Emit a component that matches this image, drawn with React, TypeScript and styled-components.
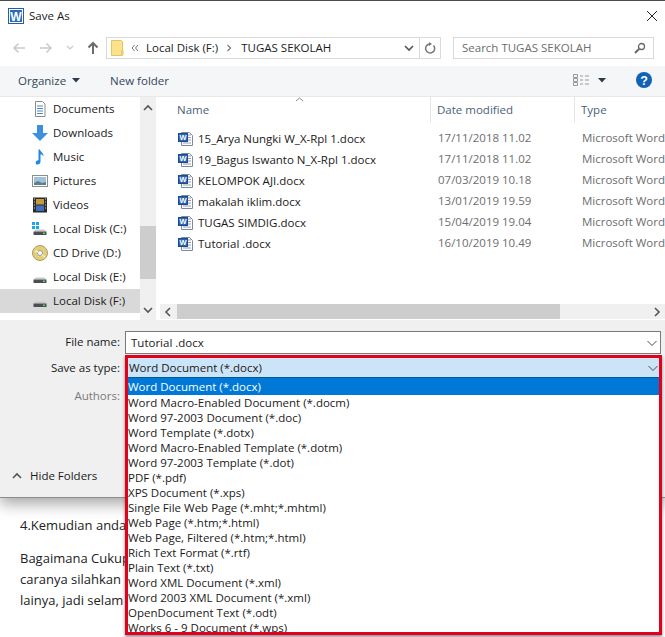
import styled, { createGlobalStyle } from "styled-components";
import { ReactNode } from "react";

const GlobalStyle = createGlobalStyle`
  html, body {
    margin: 0;
    padding: 0;
    width: 665px;
    height: 637px;
    overflow: hidden;
    background: #fff;
  }
  * { box-sizing: border-box; }
  body {
    font-family: "Open Sans", "Noto Sans", sans-serif;
    font-size: 11.5px;
    color: #1a1a1a;
  }
`;

const Page = styled.div`
  width: 665px;
  height: 637px;
  overflow: hidden;
  background: #fff;
`;

const Dialog = styled.div`
  position: relative;
  height: 498px;
  border-top: 1px solid #4a4a4a;
  border-bottom: 1px solid #8c8c8c;
  background: #fff;
  box-shadow: 0 6px 14px rgba(0, 0, 0, 0.35);
  display: flex;
  flex-direction: column;
`;

const TitleBar = styled.div`
  height: 29px;
  display: flex;
  align-items: center;
  padding: 0 7px 0 8px;
  gap: 5px;
  flex: none;
`;

const TitleText = styled.span`
  flex: 1;
`;

const AddressRow = styled.div`
  height: 36px;
  flex: none;
  display: flex;
  align-items: center;
  padding: 0 11px 0 12px;
`;

const NavButtons = styled.div`
  width: 94px;
  display: flex;
  align-items: center;
  gap: 13px;
`;

const AddressBox = styled.div`
  width: 335px;
  height: 22px;
  border: 1px solid #d9d9d9;
  display: flex;
  align-items: center;
  padding-left: 4px;
`;

const BarText = styled.span`
  margin-bottom: 2px;
`;

const Crumb = styled.span<{ $first?: boolean }>`
  margin: ${(p) => (p.$first ? "0 7px 0 7px" : "0 9px 0 8px")};
`;

const Spacer = styled.div`
  flex: 1;
`;

const RefreshCell = styled.div`
  width: 21px;
  height: 100%;
  border-left: 1px solid #d9d9d9;
  margin-left: 4px;
  display: flex;
  align-items: center;
  justify-content: center;
`;

const SearchBox = styled.div`
  width: 201px;
  height: 22px;
  margin-left: 12px;
  border: 1px solid #d9d9d9;
  display: flex;
  align-items: center;
  justify-content: space-between;
  padding: 0 7px 0 8px;
  color: #6d6d6d;
`;

const Toolbar = styled.div`
  height: 31px;
  flex: none;
  background: #f5f6f7;
  border-bottom: 1px solid #e8e8e8;
  display: flex;
  align-items: center;
  padding: 0 13px 2px 18px;
  color: #33475b;
`;

const ToolLabel = styled.span`
  margin-right: 6px;
`;

const NewFolder = styled.span`
  margin-left: 30px;
  flex: 1;
`;

const ViewGroup = styled.div`
  display: flex;
  align-items: center;
  gap: 8px;
  margin-right: 30px;
`;

const Main = styled.div`
  height: 223px;
  flex: none;
  display: flex;
`;

const NavPane = styled.div`
  width: 140px;
  height: 216px;
  flex: none;
`;

const NavRow = styled.div<{ $active?: boolean }>`
  height: 24px;
  display: flex;
  align-items: center;
  padding-left: 32px;
  gap: 5px;
  background: ${(p) => (p.$active ? "#d9d9d9" : "transparent")};
`;

const NavIcon = styled.span`
  width: 16px;
  height: 16px;
  flex: none;
  display: flex;
  align-items: center;
  justify-content: center;
`;

const VScroll = styled.div`
  width: 16px;
  height: 223px;
  flex: none;
  background: #f0f0f0;
  display: flex;
  flex-direction: column;
  align-items: center;
`;

const ScrollArrowBox = styled.div`
  height: 21px;
  width: 16px;
  flex: none;
  display: flex;
  align-items: center;
  justify-content: center;
`;

const VTrack = styled.div`
  flex: 1;
  width: 100%;
  padding-top: 108px;
  padding-bottom: 20px;
`;

const VThumb = styled.div`
  height: 100%;
  background: #cdcdcd;
`;

const ListPane = styled.div`
  flex: 1;
  margin-left: 4px;
  min-width: 0;
  display: flex;
  flex-direction: column;
  overflow: hidden;
  position: relative;
`;

const HeaderRow = styled.div`
  height: 26px;
  flex: none;
  display: grid;
  grid-template-columns: 271px 144px 1fr;
  color: #4c607a;
`;

const HeaderCell = styled.div<{ $first?: boolean }>`
  display: flex;
  align-items: center;
  padding-left: ${(p) => (p.$first ? "17px" : "6px")};
  padding-bottom: 2px;
  border-right: 1px solid #e5e5e5;
  &:last-child { border-right: none; }
`;

const SortCaret = styled.span`
  position: absolute;
  left: 135px;
  top: 0;
  line-height: 0;
`;

const FileList = styled.div`
  flex: 1;
  padding-top: 5px;
`;

const FileRow = styled.div`
  height: 21px;
  display: grid;
  grid-template-columns: 271px 144px 1fr;
  align-items: center;
`;

const FileName = styled.div`
  display: flex;
  align-items: center;
  gap: 4px;
  padding-left: 18px;
`;

const FileMeta = styled.div`
  padding-left: 7px;
  padding-bottom: 2px;
  color: #6d6d6d;
  white-space: nowrap;
`;

const HScroll = styled.div`
  height: 15px;
  margin-bottom: 1px;
  flex: none;
  background: #f0f0f0;
  display: flex;
  align-items: center;
`;

const HThumb = styled.div`
  width: 383px;
  height: 100%;
  margin-left: 1px;
  background: #cdcdcd;
`;

const Footer = styled.div`
  flex: 1;
  background: #f0f0f0;
  position: relative;
  padding-top: 11px;
`;

const FormRow = styled.div<{ $dim?: boolean }>`
  display: flex;
  align-items: center;
  height: 23px;
  margin-bottom: 3px;
  color: ${(p) => (p.$dim ? "#7a7a7a" : "#1a1a1a")};
`;

const FormLabel = styled.span`
  width: 120px;
  text-align: right;
  flex: none;
  margin-bottom: 2px;
`;

const NameInput = styled.div`
  width: 536px;
  height: 23px;
  margin-left: 5px;
  background: #fff;
  border: 1px solid #7a7a7a;
  display: flex;
  align-items: center;
  justify-content: space-between;
  padding: 0 2px 0 5px;
`;

const AuthorsRow = styled(FormRow)`
  margin-top: 5px;
`;

const HideFolders = styled.div`
  position: absolute;
  left: 11px;
  bottom: 14px;
  display: flex;
  align-items: center;
  gap: 7px;
`;

const TypeFrame = styled.div`
  position: absolute;
  left: 125px;
  top: 35px;
  width: 537px;
  height: 280px;
  border: 3px solid #e2001a;
  background: #fff;
  box-shadow: 0 2px 3px rgba(60, 60, 90, 0.6);
  overflow: hidden;
`;

const TypeCombo = styled.div`
  height: 20px;
  background: #cce4f7;
  border-bottom: 1px solid #005a9e;
  display: flex;
  align-items: center;
  justify-content: space-between;
  padding: 0 0 0 1px;
`;

const TypeItem = styled.div<{ $selected?: boolean }>`
  height: ${(p) => (p.$selected ? "17px" : "15px")};
  line-height: ${(p) => (p.$selected ? "17px" : "15px")};
  white-space: nowrap;
  background: ${(p) => (p.$selected ? "#0078d7" : "transparent")};
  color: ${(p) => (p.$selected ? "#fff" : "#1a1a1a")};
`;

const Article = styled.div`
  padding: 17px 0 0 20px;
  font-size: 13px;
  color: #222;
`;

const ArticleLine = styled.div<{ $gap?: number }>`
  height: 21px;
  line-height: 21px;
  white-space: nowrap;
  margin-bottom: ${(p) => p.$gap ?? 0}px;
`;

const Glyph = ({ w = 12, h = 12, children }: { w?: number; h?: number; children: ReactNode }) => (
  <svg width={w} height={h} viewBox={`0 0 ${w} ${h}`} fill="none" style={{ display: "block", flex: "none" }}>
    {children}
  </svg>
);

const Chevron = ({ dir = "down", color = "#555" }: { dir?: string; color?: string }) => {
  const paths: Record<string, string> = {
    down: "M2 4l4 4 4-4",
    up: "M2 8l4-4 4 4",
    left: "M8 2L4 6l4 4",
    right: "M4 2l4 4-4 4",
  };
  return (
    <Glyph>
      <path d={paths[dir]} stroke={color} strokeWidth="1.6" />
    </Glyph>
  );
};

const ThinChevron = () => (
  <Glyph>
    <path d="M1.5 4l4.5 4.5L10.5 4" stroke="#4d4d4d" strokeWidth="1" />
  </Glyph>
);

const Caret = () => (
  <Glyph w={8} h={5}>
    <path d="M0 0h8L4 4.5z" fill="#2b3b50" />
  </Glyph>
);

const WordLogo = () => (
  <svg width="16" height="16" viewBox="0 0 16 16" style={{ display: "block", flex: "none" }}>
    <rect x="0.5" y="0.5" width="15" height="15" fill="#fff" stroke="#2a5d9f" />
    <rect x="2" y="2" width="12" height="12" fill="#2b6cc0" />
    <text x="8" y="12.5" textAnchor="middle" fontSize="12" fontWeight="700" fontFamily="Liberation Sans" fill="#fff">W</text>
  </svg>
);

const DocIcon = () => (
  <svg width="16" height="16" viewBox="0 0 16 16" style={{ display: "block", flex: "none" }}>
    <path d="M3.5 1.5h8l3 3v10h-11z" fill="#fff" stroke="#7a8b9c" />
    <path d="M10 4h3M10 6.5h3M10 9h3M5 12h8" stroke="#8aa0b8" />
    <rect x="0.5" y="2.5" width="9" height="8" fill="#2a65b5" stroke="#1c4a8a" />
    <text x="5" y="9.3" textAnchor="middle" fontSize="7.5" fontWeight="700" fontFamily="Liberation Sans" fill="#fff">W</text>
  </svg>
);

const DriveShape = () => (
  <>
    <path d="M2 10.5l1.5-2h9l1.5 2z" fill="#c9c9c9" />
    <rect x="1.5" y="10.5" width="13" height="3.5" fill="#4a4f52" />
    <rect x="11" y="11.5" width="2" height="1.5" fill="#5fd35f" />
  </>
);

const navIcons: Record<string, ReactNode> = {
  documents: (
    <Glyph w={16} h={16}>
      <path d="M3.5 0.5h7l2.5 2.5v12.500h-9.500z" fill="#fff" stroke="#8a8a8a" />
      <path d="M5 5h6M5 7.500h6M5 10h6M5 12.500h6" stroke="#4d87c7" />
    </Glyph>
  ),
  downloads: (
    <Glyph w={16} h={16}>
      <path d="M5 0h6v8h5l-8 8-8-8h5z" fill="#3f8fe0" />
    </Glyph>
  ),
  music: (
    <Glyph w={16} h={16}>
      <path d="M6.500 0.500h1.500c0.500 3 4 3.500 3.500 7-0.800-1.500-2-2.200-3-2.300v7.300c0 1.800-1.500 3-3 3s-1.800-0.800-1.800-1.800c0-1.500 1.500-2.700 2.800-2.400z" fill="#1e88e5" />
    </Glyph>
  ),
  pictures: (
    <Glyph w={16} h={16}>
      <rect x="0.500" y="2.500" width="15" height="11" fill="#fff" stroke="#8d8d8d" />
      <rect x="2" y="4" width="12" height="8" fill="#9fc3dd" />
      <path d="M2 10l4-2 4 2 4-1v3H2z" fill="#5f7f8c" />
    </Glyph>
  ),
  videos: (
    <Glyph w={16} h={16}>
      <rect x="1" y="0.500" width="14" height="15" fill="#2a2a2a" />
      <rect x="4" y="2" width="8" height="5.500" fill="#c79a3a" />
      <rect x="4" y="8.500" width="8" height="5.500" fill="#3f6fc0" />
      <path d="M2 2h1M2 5h1M2 8h1M2 11h1M13 2h1M13 5h1M13 8h1M13 11h1" stroke="#ddd" />
    </Glyph>
  ),
  diskC: (
    <Glyph w={16} h={16}>
      <DriveShape />
      <path d="M0 1h3v3H0zM4 1h3v3H4zM0 5h3v3H0zM4 5h3v3H4z" fill="#1ea7e8" />
    </Glyph>
  ),
  cd: (
    <Glyph w={16} h={16}>
      <circle cx="8" cy="8" r="7.500" fill="#e3cf7a" stroke="#a99b62" />
      <circle cx="8" cy="8" r="2.500" fill="#fff" stroke="#999" />
      <path d="M3 6l3 1M10 10l3 2" stroke="#f7f2d0" strokeWidth="1.500" />
    </Glyph>
  ),
  disk: (
    <Glyph w={16} h={16}>
      <DriveShape />
    </Glyph>
  ),
};

const navItems = [
  { icon: "documents", label: "Documents" },
  { icon: "downloads", label: "Downloads" },
  { icon: "music", label: "Music" },
  { icon: "pictures", label: "Pictures" },
  { icon: "videos", label: "Videos" },
  { icon: "diskC", label: "Local Disk (C:)" },
  { icon: "cd", label: "CD Drive (D:)" },
  { icon: "disk", label: "Local Disk (E:)" },
  { icon: "disk", label: "Local Disk (F:)", active: true },
];

const files = [
  ["15_Arya Nungki W_X-Rpl 1.docx", "17/11/2018 11.02"],
  ["19_Bagus Iswanto N_X-Rpl 1.docx", "17/11/2018 11.02"],
  ["KELOMPOK AJI.docx", "07/03/2019 10.18"],
  ["makalah iklim.docx", "13/01/2019 19.59"],
  ["TUGAS SIMDIG.docx", "15/04/2019 19.04"],
  ["Tutorial .docx", "16/10/2019 10.49"],
];

const saveTypes = [
  "Word Document (*.docx)",
  "Word Macro-Enabled Document (*.docm)",
  "Word 97-2003 Document (*.doc)",
  "Word Template (*.dotx)",
  "Word Macro-Enabled Template (*.dotm)",
  "Word 97-2003 Template (*.dot)",
  "PDF (*.pdf)",
  "XPS Document (*.xps)",
  "Single File Web Page (*.mht;*.mhtml)",
  "Web Page (*.htm;*.html)",
  "Web Page, Filtered (*.htm;*.html)",
  "Rich Text Format (*.rtf)",
  "Plain Text (*.txt)",
  "Word XML Document (*.xml)",
  "Word 2003 XML Document (*.xml)",
  "OpenDocument Text (*.odt)",
  "Works 6 - 9 Document (*.wps)",
];

export default function App() {
  return (
    <Page>
      <GlobalStyle />
      <Dialog>
        <TitleBar>
          <WordLogo />
          <TitleText>Save As</TitleText>
          <Glyph>
            <path d="M1 1l10 10M11 1L1 11" stroke="#222" strokeWidth="1" />
          </Glyph>
        </TitleBar>

        <AddressRow>
          <NavButtons>
            <Glyph w={14} h={12}>
              <path d="M13 6H2M6.500 1.500L2 6l4.500 4.500" stroke="#c9c9c9" strokeWidth="1.500" />
            </Glyph>
            <Glyph w={14} h={12}>
              <path d="M1 6h11M7.500 1.500L12 6l-4.500 4.500" stroke="#c9c9c9" strokeWidth="1.500" />
            </Glyph>
            <Glyph w={8} h={6}>
              <path d="M1 1l3 3 3-3" stroke="#c9c9c9" strokeWidth="1.200" />
            </Glyph>
            <Glyph w={12} h={14}>
              <path d="M6 13V2M1.500 6.500L6 2l4.500 4.500" stroke="#6b6b6b" strokeWidth="2" />
            </Glyph>
          </NavButtons>
          <AddressBox>
            <Glyph w={13} h={16}>
              <path d="M0.500 0.500h10l1 1v14h-11z" fill="#fbe38e" stroke="#e2c566" />
              <rect x="10" y="10" width="2.500" height="5" fill="#e8cb6c" />
            </Glyph>
            <Crumb $first>
              <Glyph w={8} h={8}>
                <path d="M3.500 1L1 4l2.500 3M7 1L4.500 4 7 7" stroke="#777" />
              </Glyph>
            </Crumb>
            <BarText>Local Disk (F:)</BarText>
            <Crumb>
              <Glyph w={6} h={8}>
                <path d="M1.500 1l3 3-3 3" stroke="#777" strokeWidth="1.200" />
              </Glyph>
            </Crumb>
            <BarText>TUGAS SEKOLAH</BarText>
            <Spacer />
            <Chevron />
            <RefreshCell>
              <Glyph>
                <path d="M9.500 3.500A4.500 4.500 0 1 1 6 2" stroke="#777" strokeWidth="1.500" />
                <path d="M5 0l3 2-3 2z" fill="#777" />
              </Glyph>
            </RefreshCell>
          </AddressBox>
          <SearchBox>
            <BarText>Search TUGAS SEKOLAH</BarText>
            <Glyph>
              <circle cx="7.500" cy="4.500" r="3" stroke="#666" strokeWidth="1.300" />
              <path d="M5 7l-4 4" stroke="#666" strokeWidth="2" />
            </Glyph>
          </SearchBox>
        </AddressRow>

        <Toolbar>
          <ToolLabel>Organize</ToolLabel>
          <Caret />
          <NewFolder>New folder</NewFolder>
          <ViewGroup>
            <Glyph w={17} h={13}>
              <path d="M0.500 0.500h4v3h-4zM0.500 4.500h4v3h-4zM0.500 8.500h4v3h-4z" stroke="#9a9a9a" />
              <path d="M7 2h3M12 2h4M7 6h3M12 6h4M7 10h3M12 10h4" stroke="#9a9a9a" />
            </Glyph>
            <Caret />
          </ViewGroup>
          <svg width="16" height="16" viewBox="0 0 16 16" style={{ display: "block", flex: "none" }}>
            <circle cx="8" cy="8" r="8" fill="#0f62b5" />
            <text x="8" y="12.500" textAnchor="middle" fontSize="12.500" fontWeight="700" fontFamily="Liberation Sans" fill="#fff">?</text>
          </svg>
        </Toolbar>

        <Main>
          <NavPane>
            {navItems.map((item) => (
              <NavRow key={item.label} $active={item.active}>
                <NavIcon>{navIcons[item.icon]}</NavIcon>
                <BarText>{item.label}</BarText>
              </NavRow>
            ))}
          </NavPane>
          <VScroll>
            <ScrollArrowBox>
              <Chevron dir="up" />
            </ScrollArrowBox>
            <VTrack>
              <VThumb />
            </VTrack>
            <ScrollArrowBox>
              <Chevron dir="down" />
            </ScrollArrowBox>
          </VScroll>
          <ListPane>
            <SortCaret>
              <Glyph w={9} h={5}>
                <path d="M1 4l3.500-3L8 4" stroke="#8a8a8a" />
              </Glyph>
            </SortCaret>
            <HeaderRow>
              <HeaderCell $first>Name</HeaderCell>
              <HeaderCell>Date modified</HeaderCell>
              <HeaderCell>Type</HeaderCell>
            </HeaderRow>
            <FileList>
              {files.map(([name, date]) => (
                <FileRow key={name}>
                  <FileName>
                    <DocIcon />
                    {name}
                  </FileName>
                  <FileMeta>{date}</FileMeta>
                  <FileMeta>Microsoft Word</FileMeta>
                </FileRow>
              ))}
            </FileList>
            <HScroll>
              <ScrollArrowBox>
                <Chevron dir="left" />
              </ScrollArrowBox>
              <HThumb />
              <Spacer />
              <ScrollArrowBox>
                <Chevron dir="right" />
              </ScrollArrowBox>
            </HScroll>
          </ListPane>
        </Main>

        <Footer>
          <FormRow>
            <FormLabel>File name:</FormLabel>
            <NameInput>
              Tutorial .docx
              <ThinChevron />
            </NameInput>
          </FormRow>
          <FormRow>
            <FormLabel>Save as type:</FormLabel>
          </FormRow>
          <AuthorsRow $dim>
            <FormLabel>Authors:</FormLabel>
          </AuthorsRow>
          <HideFolders>
            <Chevron dir="up" />
            Hide Folders
          </HideFolders>
          <TypeFrame>
            <TypeCombo>
              Word Document (*.docx)
              <ThinChevron />
            </TypeCombo>
            {saveTypes.map((type, i) => (
              <TypeItem key={type} $selected={i === 0}>
                {type}
              </TypeItem>
            ))}
          </TypeFrame>
        </Footer>
      </Dialog>

      <Article>
        <ArticleLine $gap={12}>4.Kemudian anda</ArticleLine>
        <ArticleLine>Bagaimana Cukup</ArticleLine>
        <ArticleLine>caranya silahkan s</ArticleLine>
        <ArticleLine>lainya, jadi selam</ArticleLine>
      </Article>
    </Page>
  );
}
